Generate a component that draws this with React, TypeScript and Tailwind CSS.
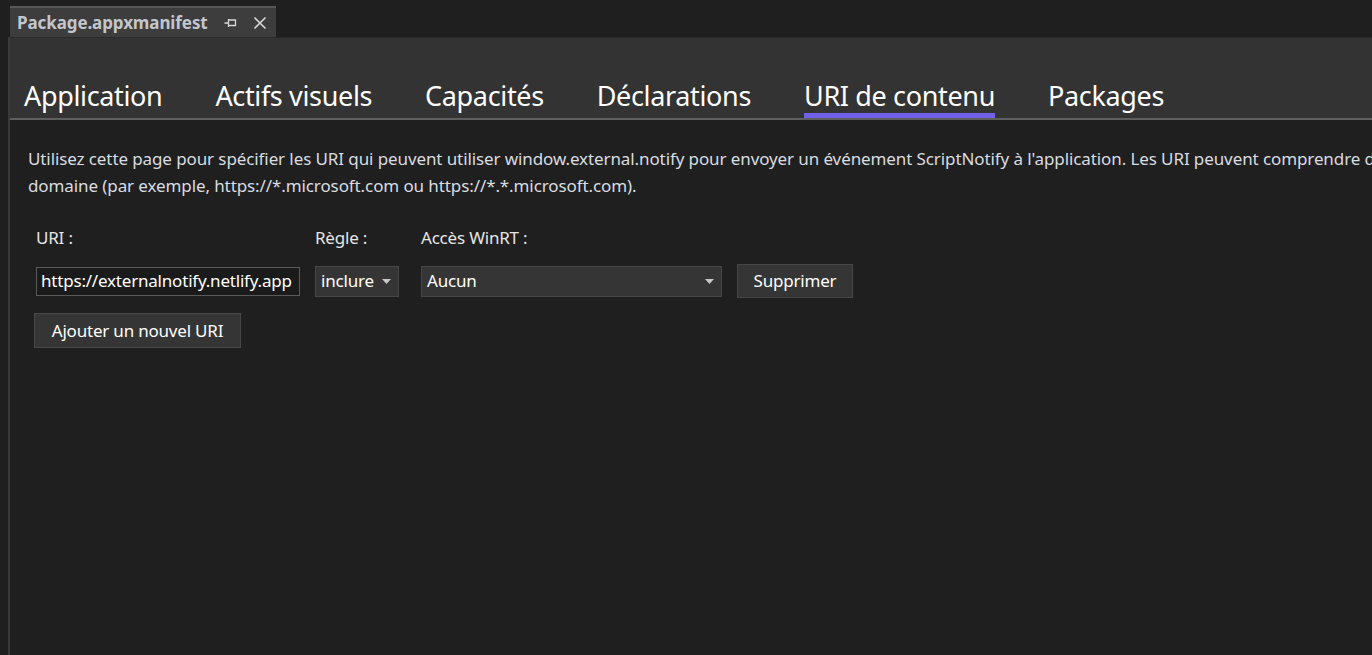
import React from "react";

const tabs = ["Application", "Actifs visuels", "Capacités", "Déclarations", "URI de contenu", "Packages"];
const selectedTab = "URI de contenu";

function App() {
  return (
    <main
      className="w-screen h-[655px] bg-[#1f1f1f] overflow-hidden flex flex-col text-[#e8e8e8]"
      style={{ fontFamily: '"Noto Sans", "Open Sans", sans-serif' }}
    >
      <div className="h-[37px] pt-[6px] pl-[10px] flex shrink-0">
        <div className="w-[266px] h-[31px] bg-[#3d3d3d] border-t-2 border-[#575757] flex items-center pl-[7px]">
          <span className="text-[17px] font-bold text-[#c3c6cc] tracking-[-0.1px]">Package.appxmanifest</span>
          <PinIcon />
          <svg width="14" height="14" viewBox="0 0 14 14" className="ml-[15px]">
            <path d="M1.5 1.5 L12.5 12.5 M12.5 1.5 L1.5 12.5" stroke="#d6d6d6" strokeWidth="1.6" />
          </svg>
        </div>
      </div>

      <div className="flex flex-1 min-h-0">
        <div className="w-[8px] shrink-0" />
        <div className="w-[2px] bg-[#3a3a3a] shrink-0" />
        <section className="flex-1 min-w-0 flex flex-col">
          <div className="h-[83px] bg-[#333333] border-t border-[#2a2a2a] border-b-2 border-b-[#5e5e5e] flex items-end pl-[14px] gap-[53px] shrink-0">
            {tabs.map((t) => (
              <div key={t} className="flex flex-col items-stretch">
                <span className="text-[27px] leading-[34px] tracking-[-0.35px] whitespace-nowrap text-white">{t}</span>
                <div className={t === selectedTab ? "h-[5px] bg-[#7160e8]" : "h-[5px]"} />
              </div>
            ))}
          </div>

          <div className="pl-[18px] pt-[25px] text-[17px] leading-[27px] tracking-[-0.1px] text-[#d9dce0] whitespace-nowrap overflow-hidden">
            <p>
              Utilisez cette page pour spécifier les URI qui peuvent utiliser window.external.notify pour envoyer un
              événement ScriptNotify à l'application. Les URI peuvent comprendre d
            </p>
            <p>domaine (par exemple, https://*.microsoft.com ou https://*.*.microsoft.com).</p>
          </div>

          <div className="pl-[26px] pt-[27px] text-[17px] text-[#e6e6e6] tracking-[-0.2px]">
            <div className="flex h-[24px] items-center">
              <span className="w-[279px]">URI :</span>
              <span className="w-[106px]">Règle :</span>
              <span>Accès WinRT :</span>
            </div>
            <div className="flex items-center mt-[14px]">
              <div className="w-[264px] h-[29px] bg-[#1a1a1a] border border-[#5a5a5a] flex items-center pl-[4px] overflow-hidden whitespace-nowrap text-white">
                https://externalnotify.netlify.app
              </div>
              <Select label="inclure" width="w-[84px] ml-[15px]" />
              <Select label="Aucun" width="w-[301px] ml-[22px]" />
              <button className="ml-[15px] w-[116px] h-[34px] bg-[#353535] border border-[#474747] text-white">
                Supprimer
              </button>
            </div>
            <button className="mt-[15px] -ml-[2px] w-[207px] h-[35px] bg-[#353535] border border-[#474747] text-white">
              Ajouter un nouvel URI
            </button>
          </div>
        </section>
      </div>
    </main>
  );
}

export default App;

const Select = ({ label, width }: { label: string; width: string }) => {
  return (
    <div className={`${width} h-[31px] bg-[#353535] border border-[#474747] flex items-center justify-between pl-[5px] pr-[7px] text-white`}>
      <span>{label}</span>
      <svg width="9" height="5" viewBox="0 0 9 5">
        <path d="M0 0 L9 0 L4.5 5 Z" fill="#c8c8c8" />
      </svg>
    </div>
  );
};

const PinIcon = () => {
  return (
    <svg width="14" height="12" viewBox="0 0 14 12" className="ml-[16px]">
      <path d="M0.5 6 H4.5 M4.5 2 V10 M4.5 3 H11.5 V8.5 H4.5" stroke="#d6d6d6" strokeWidth="1.3" fill="none" />
    </svg>
  );
};
